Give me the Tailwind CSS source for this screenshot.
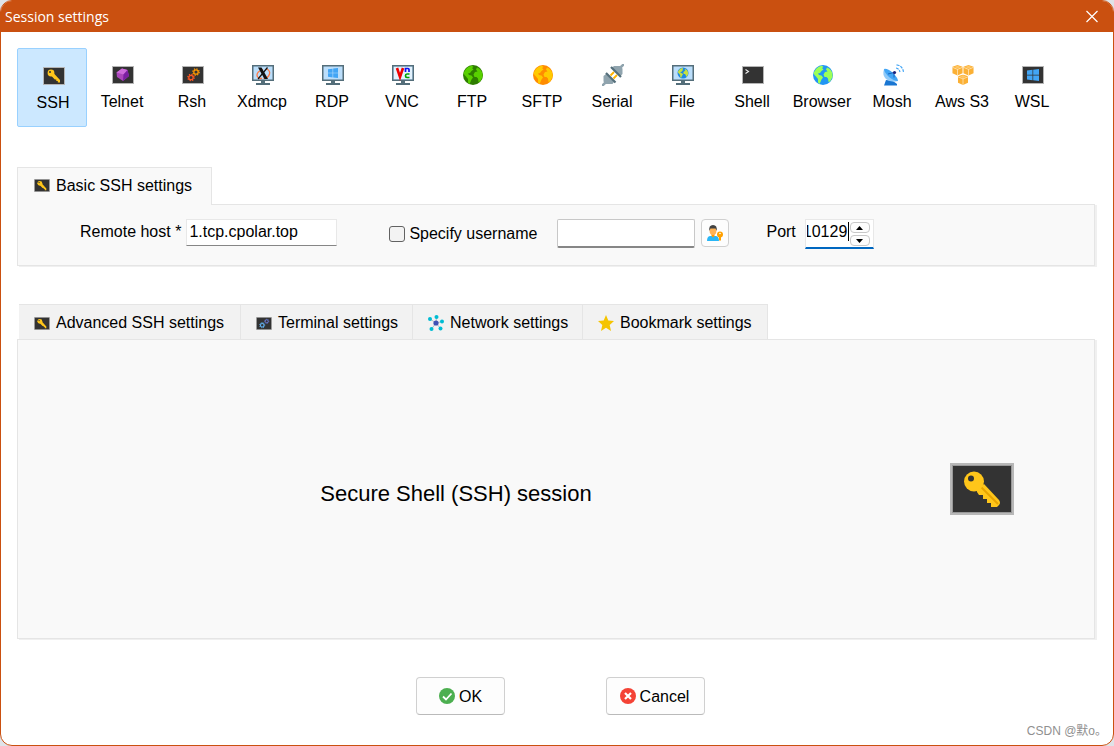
<!DOCTYPE html>
<html lang="en">
<head>
<meta charset="utf-8">
<title>Session settings</title>
<meta name="viewport" content="width=device-width, initial-scale=1">
<script src="https://cdn.jsdelivr.net/npm/@tailwindcss/browser@4"></script>
</head>
<body class="min-h-screen bg-[#dfe3e8] font-['Liberation_Sans',Arial,sans-serif] text-base leading-5 text-black">

<svg class="hidden" aria-hidden="true">
  <symbol id="screen" viewBox="0 0 22 18"><path d="M0 0h22v18H0z" fill="#b5b5b5"/><path d="M1 1h20v16H1z" fill="#333"/></symbol>
  <symbol id="key" viewBox="0 0 64 52">
    <path d="M0 0h64v52H0z" fill="#b8b8b8"/><path d="M2 2h60v48H2z" fill="#999"/><path d="M3 3h58v46H3z" fill="#333"/>
    <path d="M27 27l7-6 15 16q2 3 0 5l-2 2h-6v-4h-4v-4h-4v-4h-4l-2-3z" fill="#ffc61a"/>
    <path d="M31 24l17 17" stroke="#e8a400" stroke-width="2"/>
    <circle cx="24" cy="18.500" r="10" fill="#ffc61a"/><circle cx="21" cy="15.500" r="3" fill="#333"/>
  </symbol>
  <symbol id="keysmall" viewBox="0 0 22 18">
    <path d="M0 0h22v18H0z" fill="#b5b5b5"/><path d="M1 1h20v16H1z" fill="#333"/>
    <path d="M8 8.500l2.500-2.500 6.500 7v2.500h-2.200v-1.500h-1.500v-1.500h-1.500z" fill="#ffc61a"/>
    <circle cx="8" cy="6" r="3.400" fill="#ffc61a"/><circle cx="7" cy="5" r="1" fill="#333"/>
  </symbol>
  <symbol id="monitor" viewBox="0 0 22 20">
    <path d="M0 0h22v16H0z" fill="#546e7a"/><path d="M1.500 1.500h19v13h-19z" fill="#bbdefb"/>
    <path d="M9 16h4v2h5v2H4v-2h5z" fill="#546e7a"/>
  </symbol>
  <symbol id="gear" viewBox="0 0 8 8">
    <circle cx="4" cy="4" r="2.200" fill="none" stroke="currentColor" stroke-width="1.300"/>
    <circle cx="4" cy="4" r="3.200" fill="none" stroke="currentColor" stroke-width="1.200" stroke-dasharray="1.250 1.263"/>
  </symbol>
  <symbol id="land" viewBox="0 0 20 20">
    <path d="M3 4Q5.500 1 9 .700L10.500 2 9 3l1.500 1.500-2 1.500L7 8 5 8.500l1 1.500 2.500.500 1.500 2-1.500 2L7.500 17l-1 2L5 17.500V14l-2-2.500L1.500 10 .500 8zM14 2.500Q18.500 4 19.500 9v3l-2.500 4.500-1.500.500-.500-3.500-1.500-1.500h-2l-1-2.500 1.500-2.500 2.500-.500L13 4.500z" fill="currentColor"/>
  </symbol>
  <symbol id="win" viewBox="0 0 12 12"><path d="M0 1.600l5.500-.800v4.900H0zM6.200.700L12 0v5.700H6.200zM0 6.400h5.500v4.900L0 10.500zM6.200 6.400H12V12l-5.800-.700z" fill="#42a5f5"/></symbol>
  <symbol id="cube" viewBox="0 0 12 12"><path d="M6 0l5.500 2v7L6 11.500.500 9V2z" fill="#fbb034"/><path d="M.500 2.500L6 4.800l5.500-2.300M6 4.800v6.500" fill="none" stroke="#fff3dc" stroke-width=".7"/><path d="M6 .800L9.500 2.200 6 3.700 2.500 2.200z" fill="#ffc766"/></symbol>
</svg>

<div class="flex min-h-screen flex-col overflow-hidden rounded-xl border border-[#ca5010] bg-white">
  <header class="flex h-[31px] shrink-0 items-center justify-between bg-[#ca5010] pr-[13px] pl-1 text-white">
    <h1 class="font-['Open_Sans','Noto_Sans',sans-serif] text-sm">Session settings</h1>
    <button type="button" aria-label="Close"><svg class="size-4" viewBox="0 0 16 16" fill="none" stroke="#fff" stroke-width="1.200"><path d="M2.500 2l11 11m0-11l-11 11"/></svg></button>
  </header>

  <main class="flex grow flex-col pr-[18px] pl-4 pt-4 pb-[30px]">
    <nav class="flex h-[79px] shrink-0 [&_svg]:ml-0.5" aria-label="Session type">
      <button type="button" aria-pressed="true" class="flex w-[70px] flex-col items-center rounded-xs border border-[#99d1ff] bg-[#cce8ff] pt-4 pl-0.5"><svg class="h-[22px] w-[22px]"><use href="#keysmall" y="2" width="22" height="18"/></svg><span class="mt-1.5">SSH</span></button>
      <button type="button" class="flex w-[70px] flex-col items-center pt-4"><svg class="h-[22px] w-[22px]"><use href="#screen" y="2" width="22" height="18"/><path d="M10 4.500l5.500 1.500 1.500 6-6 5-6-4-.500-4.500z" fill="#ab47bc"/><path d="M10 4.500l5.500 1.500-4 4.500-7-2z" fill="#ce6bdc"/><path d="M15.500 6l1.500 6-6 5 .500-6.500z" fill="#7b1fa2"/></svg><span class="mt-1.5">Telnet</span></button>
      <button type="button" class="flex w-[70px] flex-col items-center pt-4"><svg class="h-[22px] w-[22px]"><use href="#screen" y="2" width="22" height="18"/><use href="#gear" x="10" y="4" width="8" height="8" color="#ff9800"/><use href="#gear" x="5" y="9.500" width="8" height="8" color="#ff5722"/></svg><span class="mt-1.5">Rsh</span></button>
      <button type="button" class="flex w-[70px] flex-col items-center pt-4"><svg class="h-[22px] w-[22px]"><use href="#monitor" y="1" width="22" height="20"/><path d="M10 14.500q-5 0-5-3.500t6-5.500m3-1q4.500 2 3.500 5.500-1 4-6 4.500" fill="none" stroke="#ff7a45" stroke-width="1.300"/><path d="M6 3.500h3.500l6.500 11.500h-3.500z" fill="#111"/><path d="M15.500 3.500L6 15" stroke="#111" stroke-width="1.200"/></svg><span class="mt-1.5">Xdmcp</span></button>
      <button type="button" class="flex w-[70px] flex-col items-center pt-4"><svg class="h-[22px] w-[22px]"><use href="#monitor" y="1" width="22" height="20"/><use href="#win" x="6" y="4" width="10" height="10"/></svg><span class="mt-1.5">RDP</span></button>
      <button type="button" class="flex w-[70px] flex-col items-center pt-4"><svg class="h-[22px] w-[22px]"><use href="#monitor" y="1" width="22" height="20"/><path d="M2 3h18v12H2z" fill="#e3f2fd"/><path d="M5 4l3 9 3-9" fill="none" stroke="#f00000" stroke-width="2.600"/><path d="M13.500 8V4.500H16q1 0 1 1V8" fill="none" stroke="#1010f0" stroke-width="1.700"/><path d="M17.500 10H15q-1.500 0-1.500 1.700T15 13.500h2.500" fill="none" stroke="#00a000" stroke-width="1.700"/></svg><span class="mt-1.5">VNC</span></button>
      <button type="button" class="flex w-[70px] flex-col items-center pt-4"><svg class="h-[22px] w-[22px]"><circle cx="11" cy="11" r="10" fill="#2e7d00"/><use href="#land" x="1" y="1" width="20" height="20" color="#58d000"/></svg><span class="mt-1.5">FTP</span></button>
      <button type="button" class="flex w-[70px] flex-col items-center pt-4"><svg class="h-[22px] w-[22px]"><circle cx="11" cy="11" r="10" fill="#ff8c00"/><use href="#land" x="1" y="1" width="20" height="20" color="#ffca00"/></svg><span class="mt-1.5">SFTP</span></button>
      <button type="button" class="flex w-[70px] flex-col items-center pt-4"><svg class="h-[22px] w-[22px]"><path d="M0 22l3.500-3.500M18.500 3.500L22 0" stroke="#90a4ae" stroke-width="2.500"/><path d="M4 10l8 8-1.500 2H4l-2.500-2.500V12zM10 3.500L12 2h6l2.500 2.500V10l-2 2z" fill="#90a4ae"/><path d="M8.500 11.500l3.500-3.500m-.500 6.500l3.500-3.500" stroke="#ffb300" stroke-width="1.800"/><path d="M4 9l9.500 9.500M9 3l10 10" stroke="#546e7a" stroke-width="2.200"/></svg><span class="mt-1.5">Serial</span></button>
      <button type="button" class="flex w-[70px] flex-col items-center pt-4"><svg class="h-[22px] w-[22px]"><use href="#monitor" y="1" width="22" height="20"/><circle cx="11" cy="9" r="5.500" fill="#1e88e5"/><use href="#land" x="5.500" y="3.500" width="11" height="11" color="#c6e040"/></svg><span class="mt-1.5">File</span></button>
      <button type="button" class="flex w-[70px] flex-col items-center pt-4"><svg class="h-[22px] w-[22px]"><use href="#screen" y="2" width="22" height="18"/><path d="M3.500 5.500l3 2-3 2" fill="none" stroke="#eee" stroke-width="1.100"/></svg><span class="mt-1.5">Shell</span></button>
      <button type="button" class="flex w-[70px] flex-col items-center pt-4"><svg class="h-[22px] w-[22px]"><circle cx="11" cy="11" r="10" fill="#2196f3"/><use href="#land" x="1" y="1" width="20" height="20" color="#9cff57"/></svg><span class="mt-1.5">Browser</span></button>
      <button type="button" class="flex w-[70px] flex-col items-center pt-4"><svg class="h-[22px] w-[22px]"><path d="M4 16l7 1 4 3v1.500H2z" fill="#1976d2"/><path d="M2 5q-2 6 2 10 5 4 12 2z" fill="#90caf9"/><path d="M2 5q3-1 9 4 5 5 5 8-4 0-9-4-5-5-5-8z" fill="#42a5f5"/><path d="M6 10l6-1.500v5" fill="none" stroke="#1565c0" stroke-width="1"/><circle cx="12.500" cy="8.500" r="1.600" fill="#1a237e"/><path d="M14 4q3 .500 4 4M14.500.800q6 1 7 7" fill="none" stroke="#42a5f5" stroke-width="1.200" stroke-dasharray="3 1"/></svg><span class="mt-1.5">Mosh</span></button>
      <button type="button" class="flex w-[70px] flex-col items-center pt-4"><svg class="h-[22px] w-[22px]"><use href="#cube" x="0" y="1" width="11" height="11"/><use href="#cube" x="11" y="1" width="11" height="11"/><use href="#cube" x="5.500" y="10.500" width="11" height="11"/></svg><span class="mt-1.5">Aws S3</span></button>
      <button type="button" class="flex w-[70px] flex-col items-center pt-4"><svg class="h-[22px] w-[22px]"><use href="#screen" y="2" width="22" height="18"/><use href="#win" x="5" y="5" width="12" height="12"/></svg><span class="mt-1.5">WSL</span></button>
    </nav>

    <section class="mt-10 shrink-0">
      <h2 class="relative -mb-px flex h-[38px] w-[195px] items-center gap-1.5 border border-b-0 border-[#e5e5e5] bg-[#f9f9f9] pb-0.5 pl-4"><svg class="h-[13px] w-4"><use href="#keysmall" width="16" height="13"/></svg>Basic SSH settings</h2>
      <form class="flex h-[62px] items-start border border-[#e5e5e5] bg-[#f9f9f9] pt-3.5 pl-[62px] shadow-[2px_1px_0_#f0f0f0]">
        <label for="host" class="mt-[3px]">Remote host *</label>
        <input id="host" type="text" value="1.tcp.cpolar.top" class="ml-[5px] h-[27px] w-[151px] border border-[#e8e8e8] border-b-[#868686] bg-white px-0.5 pb-0.5 outline-none">
        <label class="mt-[5px] ml-[52px] flex items-center gap-1"><input type="checkbox" class="size-4 appearance-none rounded-[3px] border border-[#626262] bg-[#f3f3f3]">Specify username</label>
        <input type="text" aria-label="Username" class="ml-5 h-[29px] w-[138px] rounded-xs border border-[#c8c8c8] border-b-2 border-b-[#868686] bg-white px-0.5 outline-none">
        <button type="button" aria-label="Choose user" class="ml-1.5 flex size-7 items-center justify-center rounded-sm border border-[#d0d0d0] bg-[#fdfdfd]">
          <svg class="size-4" viewBox="0 0 16 16"><path d="M0 16q0-5 3.500-5h5q3.500 0 3.500 5z" fill="#29b6f6"/><path d="M4.500 8h3v3L6 12.500 4.500 11z" fill="#ff9800"/><ellipse cx="6" cy="6" rx="3.400" ry="4" fill="#ffb255"/><path d="M2.300 6Q1.500 0 6 0t3.700 6L8.500 3.500h-5z" fill="#424242"/><circle cx="13" cy="9.500" r="3" fill="#ffa000"/><path d="M12 11h2v4l-1 1-1-1z" fill="#ffa000"/><circle cx="13" cy="8.500" r=".800" fill="#fff"/></svg>
        </button>
        <label for="port" class="mt-[3px] ml-[37px]">Port</label>
        <div class="relative ml-[9px] flex h-[30px] w-[69px] border border-[#e8e8e8] border-b-2 border-b-[#0067c0] bg-white">
          <input id="port" type="text" inputmode="numeric" value="10129" class="ml-px h-6 w-[43px] bg-transparent -indent-[4px] outline-none">
          <span class="absolute top-0.5 left-[42px] h-[19px] w-px bg-black"></span>
          <div class="flex flex-col gap-0.5 pt-0.5">
            <button type="button" aria-label="Increase port" class="flex h-[11px] w-5 items-center justify-center rounded-sm border border-[#c8c8c8] bg-[#fdfdfd]"><svg class="h-1 w-[7px]" viewBox="0 0 7 4"><path d="M0 4L3.500 0 7 4z"/></svg></button>
            <button type="button" aria-label="Decrease port" class="flex h-[11px] w-5 items-center justify-center rounded-sm border border-[#c8c8c8] bg-[#fdfdfd]"><svg class="h-1 w-[7px]" viewBox="0 0 7 4"><path d="M0 0l3.500 4L7 0z"/></svg></button>
          </div>
        </div>
      </form>
    </section>

    <section class="mt-[38px] flex grow flex-col">
      <div class="ml-0.5 flex h-[35px] shrink-0" role="tablist">
        <button role="tab" type="button" class="flex w-[222px] items-center gap-1.5 border-t border-r border-[#e5e5e5] bg-[#f2f2f2] pt-0.5 pl-[15px]"><svg class="h-[13px] w-4"><use href="#keysmall" width="16" height="13"/></svg>Advanced SSH settings</button>
        <button role="tab" type="button" class="flex w-[172px] items-center gap-1.5 border-t border-r border-[#e5e5e5] bg-[#f2f2f2] pt-0.5 pl-[15px]"><svg class="h-[13px] w-4" viewBox="0 0 16 13"><use href="#screen" width="16" height="13"/><use href="#gear" x="3" y="5" width="6.500" height="6.500" color="#64b5f6"/><use href="#gear" x="8" y="1.500" width="5.500" height="5.500" color="#7080e0"/></svg>Terminal settings</button>
        <button role="tab" type="button" class="flex w-[170px] items-center gap-1.5 border-t border-r border-[#e5e5e5] bg-[#f2f2f2] pt-0.5 pl-[15px]"><svg class="size-4" viewBox="0 0 16 16"><path d="M8 8L2 4m6 4l.500-6M8 8l6-1.500M8 8l4.500 5.500M8 8l-4.500 6" stroke="#b0bec5"/><circle cx="8" cy="8" r="2.600" fill="#3f51b5"/><g fill="#00bcd4"><circle cx="2" cy="4" r="2"/><circle cx="8.500" cy="2" r="2"/><circle cx="14" cy="6.500" r="2"/><circle cx="12.500" cy="13.500" r="2"/><circle cx="3.500" cy="14" r="2"/></g></svg>Network settings</button>
        <button role="tab" type="button" class="flex w-[185px] items-center gap-1.5 border-t border-r border-[#e5e5e5] bg-[#f2f2f2] pt-0.5 pl-[15px]"><svg class="size-4" viewBox="0 0 16 16"><path d="M8 0l2.300 5.500 5.700.500-4.300 4 1.300 6-5-3.200L3 16l1.300-6L0 6l5.700-.500z" fill="#f5c400"/></svg>Bookmark settings</button>
      </div>
      <div role="tabpanel" class="flex grow items-center border border-[#e5e5e5] bg-[#f9f9f9] pr-20 shadow-[2px_1px_0_#f0f0f0]">
        <p class="grow pt-2.5 text-center text-[22px] leading-7">Secure Shell (SSH) session</p>
        <svg class="ml-14 h-[52px] w-16 shrink-0"><use href="#key" width="64" height="52"/></svg>
      </div>
    </section>

    <footer class="relative mt-[38px] flex shrink-0 justify-center gap-[101px] pl-[9px]">
      <button type="button" class="flex h-[38px] w-[89px] items-center justify-center gap-1 rounded-sm border border-[#d0d0d0] border-b-[#bababa] bg-[#fdfdfd]"><svg class="size-4" viewBox="0 0 16 16"><circle cx="8" cy="8" r="8" fill="#4caf50"/><path d="M4 8.500L7 11.500l5.500-6" fill="none" stroke="#fff" stroke-width="1.800"/></svg><span class="pt-0.5">OK</span></button>
      <button type="button" class="flex h-[38px] w-[99px] items-center justify-center gap-1 rounded-sm border border-[#d0d0d0] border-b-[#bababa] bg-[#fdfdfd] pr-0.5"><svg class="size-4" viewBox="0 0 16 16"><circle cx="8" cy="8" r="8" fill="#f44336"/><path d="M5 5l6 6m0-6l-6 6" stroke="#fff" stroke-width="2.200"/></svg><span class="pt-0.5">Cancel</span></button>
      <p class="absolute -right-3 -bottom-6 text-xs leading-4 text-[#909090] font-['Liberation_Sans','Noto_Sans_CJK_SC',sans-serif]">CSDN @默o。</p>
    </footer>
  </main>
</div>
</body>
</html>
